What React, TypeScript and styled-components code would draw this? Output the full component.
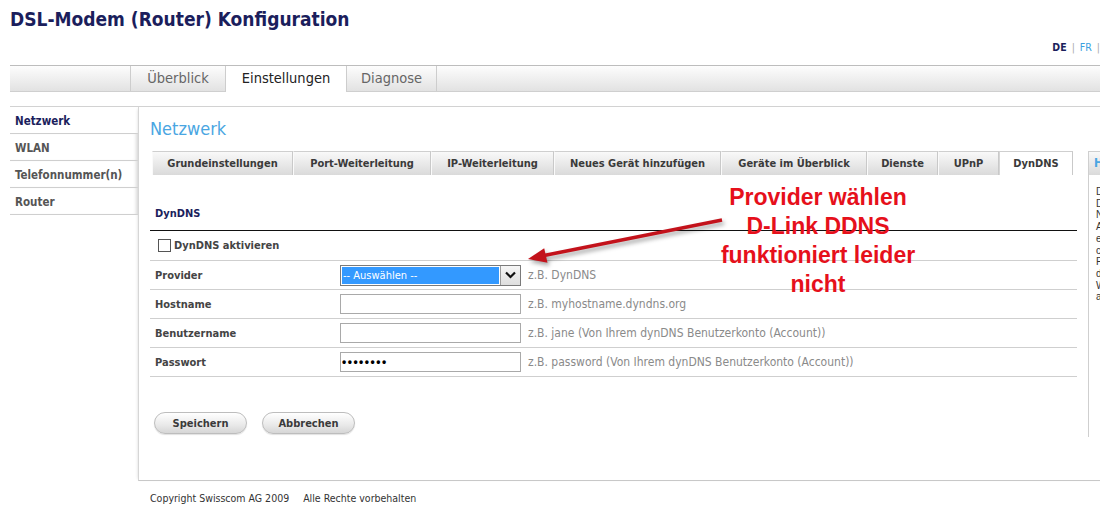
import React from 'react';
import styled, { createGlobalStyle } from 'styled-components';

const GlobalStyle = createGlobalStyle`
  * { box-sizing: border-box; }
  html, body { margin: 0; padding: 0; background: #fff; overflow: hidden; }
  body {
    font-family: "DejaVu Sans Condensed", "DejaVu Sans", Tahoma, sans-serif;
    color: #333;
  }
`;

const Page = styled.div`
  position: relative;
  width: 1100px;
  height: 526px;
  overflow: hidden;
`;

const Title = styled.h1`
  margin: 0;
  height: 40px;
  padding: 7px 0 0 10px;
  font-size: 19px;
  line-height: 24px;
  font-weight: bold;
  color: #1b1e5c;
`;

const LangBar = styled.div`
  height: 25px;
  display: flex;
  justify-content: flex-end;
  gap: 5px;
  font-size: 10.5px;
  line-height: 14px;
`;

const Lang = styled.span<{ $active?: boolean }>`
  color: ${(p) => (p.$active ? '#1b1e5c' : '#3aa0e0')};
  font-weight: ${(p) => (p.$active ? 'bold' : 'normal')};
`;

const Pipe = styled.span`
  color: #aaa;
`;

const MainNav = styled.div`
  margin-left: 10px;
  height: 27px;
  display: flex;
  padding-left: 120px;
  border-top: 1px solid #bdbdbd;
  border-bottom: 1px solid #cfcfcf;
  background: linear-gradient(#fdfdfd, #e2e2e2);
`;

const NavTab = styled.div<{ $active?: boolean; $w: number }>`
  width: ${(p) => p.$w}px;
  height: ${(p) => (p.$active ? 26 : 25)}px;
  border-left: 1px solid #cdcdcd;
  text-align: center;
  font-size: 14.5px;
  line-height: 25px;
  color: ${(p) => (p.$active ? '#222' : '#666')};
  background: ${(p) => (p.$active ? '#fff' : 'transparent')};
  &:last-child { border-right: 1px solid #cdcdcd; }
`;

const Body = styled.div`
  margin: 14px 0 0 10px;
  display: flex;
  border-top: 1px solid #d2d2d2;
`;

const Sidebar = styled.div`
  width: 128px;
  flex: none;
`;

const SideItem = styled.div<{ $active?: boolean }>`
  height: 27px;
  padding: 2px 0 0 5px;
  border-bottom: 1px solid #cfcfcf;
  font-size: 11.5px;
  font-weight: bold;
  line-height: 24px;
  color: ${(p) => (p.$active ? '#1b1e5c' : '#555')};
  box-shadow: ${(p) => (p.$active ? 'none' : 'inset -4px 0 4px -3px #cfcfcf')};
`;

const Content = styled.div`
  flex: 1;
  height: 374px;
  padding-left: 11px;
  border-left: 1px solid #d6d6d6;
  border-bottom: 1px solid #c8c8c8;
  box-shadow: -2px 0 3px -2px #d8d8d8;
`;

const Heading = styled.h2`
  margin: 12px 0 12px;
  font-size: 18px;
  line-height: 20px;
  font-weight: normal;
  color: #4aa6e2;
`;

const WorkArea = styled.div`
  display: flex;
  gap: 11px;
`;

const MainCol = styled.div`
  width: 927px;
  flex: none;
`;

const SubTabs = styled.div`
  display: flex;
  margin-left: 2px;
  height: 24px;
`;

const SubTab = styled.div<{ $active?: boolean; $w: number }>`
  width: ${(p) => p.$w}px;
  flex: none;
  height: 24px;
  text-align: center;
  font-size: 11px;
  font-weight: bold;
  line-height: 24px;
  color: #3a3a3a;
  border-top: 1px solid #cfcfcf;
  border-left: 1px solid ${(p) => (p.$active ? '#d6d6d6' : '#fafafa')};
  border-right: 1px solid #c9c9c9;
  background: ${(p) => (p.$active ? '#fff' : 'linear-gradient(#f9f9f9, #dadada)')};
`;

const FormHead = styled.div`
  height: 56px;
  padding: 32px 0 0 5px;
  border-bottom: 1px solid #111;
  font-size: 11px;
  line-height: 14px;
  font-weight: bold;
  color: #1b1e5c;
`;

const Row = styled.div`
  height: 29px;
  display: grid;
  grid-template-columns: 185px 181px auto;
  align-items: center;
  padding-left: 5px;
  border-bottom: 1px solid #cfcfcf;
`;

const CheckRow = styled.div`
  height: 30px;
  display: flex;
  align-items: center;
  gap: 3px;
  padding-left: 8px;
  border-bottom: 1px solid #cfcfcf;
  font-size: 11px;
  font-weight: bold;
  color: #444;
`;

const CheckBox = styled.span`
  width: 13px;
  height: 13px;
  border: 1px solid #555;
  background: #fff;
`;

const Label = styled.span`
  font-size: 11px;
  font-weight: bold;
  color: #444;
`;

const Hint = styled.span`
  margin-left: 7px;
  font-size: 12px;
  color: #8a8a8a;
  white-space: nowrap;
`;

const Input = styled.input`
  width: 181px;
  height: 20px;
  margin: 0;
  padding: 0 1px;
  border: 1px solid #a9a9a9;
  font-size: 12px;
  font-weight: bold;
  letter-spacing: 1.5px;
  color: #000;
  outline: none;
`;

const Select = styled.div`
  width: 181px;
  height: 21px;
  display: flex;
  border: 1px solid #7a7a7a;
  background: #fff;
`;

const SelectValue = styled.div`
  flex: 1;
  margin: 1px;
  padding-left: 1px;
  background: #3399ff;
  color: #fff;
  font-size: 11px;
  line-height: 17px;
`;

const SelectButton = styled.div`
  width: 20px;
  display: flex;
  align-items: center;
  justify-content: center;
  border-left: 1px solid #9a9a9a;
  background: linear-gradient(#f6f6f6, #dedede);
`;

const Buttons = styled.div`
  display: flex;
  gap: 15px;
  margin: 35px 0 0 4px;
`;

const Button = styled.button`
  width: 93px;
  height: 22px;
  padding: 0;
  border: 1px solid #bdbdbd;
  border-radius: 11px;
  background: linear-gradient(#ffffff, #e9e9e9 60%, #d6d6d6);
  font-family: inherit;
  font-size: 11px;
  font-weight: bold;
  color: #3a3a3a;
  box-shadow: 0 1px 1px rgba(0, 0, 0, 0.12);
`;

const Help = styled.div`
  width: 220px;
  flex: none;
`;

const HelpTab = styled.div`
  height: 24px;
  padding-left: 5px;
  border-top: 1px solid #cfcfcf;
  border-left: 1px solid #cfcfcf;
  background: linear-gradient(#f9f9f9, #dadada);
  font-size: 12px;
  font-weight: bold;
  line-height: 23px;
  color: #4aa6e2;
`;

const HelpBody = styled.div`
  height: 262px;
  padding: 11px 0 0 7px;
  border-left: 1px solid #cfcfcf;
  font-family: "Liberation Sans", Arial, sans-serif;
  font-size: 10px;
  line-height: 11.7px;
  color: #333;
`;

const HelpLine = styled.div`
  white-space: nowrap;
`;

const Footer = styled.div`
  padding: 10px 0 0 150px;
  font-size: 10.5px;
  line-height: 14px;
  color: #333;
  display: flex;
  gap: 14px;
`;

const Note = styled.div`
  position: absolute;
  left: 690px;
  top: 183px;
  width: 256px;
  text-align: center;
  font-family: "Liberation Sans", Arial, sans-serif;
  font-size: 23px;
  font-weight: bold;
  line-height: 29px;
  color: #e6101b;
`;

const ArrowLayer = styled.svg`
  position: absolute;
  left: 0;
  top: 0;
  pointer-events: none;
  filter: drop-shadow(2px 3px 2px rgba(0, 0, 0, 0.35));
`;

const subTabs = [
  { t: 'Grundeinstellungen', w: 141 },
  { t: 'Port-Weiterleitung', w: 138 },
  { t: 'IP-Weiterleitung', w: 123 },
  { t: 'Neues Gerät hinzufügen', w: 167 },
  { t: 'Geräte im Überblick', w: 146 },
  { t: 'Dienste', w: 71 },
  { t: 'UPnP', w: 61 },
  { t: 'DynDNS', w: 74, active: true },
];

const helpLines = [
  'Dynamisches DNS (DynDNS)',
  'Dienste ermöglichen den',
  'Netzwerkzugriff über einen',
  'Adressnamen, auch wenn sich',
  'eine öffentliche IP-Adresse',
  'chronisch ändert. Wählen Sie',
  'Provider und Konto aus,',
  'das Sie beim Anbieter haben.',
  'Weitere Informationen finden',
  'auf der Seite des Anbieters.',
];

const Chevron = () => (
  <svg width="11" height="8" viewBox="0 0 11 8">
    <path d="M1 1.5 L5.5 6 L10 1.5" fill="none" stroke="#111" strokeWidth="2.2" />
  </svg>
);

export default function App() {
  return (
    <Page>
      <GlobalStyle />
      <Title>DSL-Modem (Router) Konfiguration</Title>
      <LangBar>
        <Lang $active>DE</Lang>
        <Pipe>|</Pipe>
        <Lang>FR</Lang>
        <Pipe>|</Pipe>
      </LangBar>
      <MainNav>
        <NavTab $w={95}>Überblick</NavTab>
        <NavTab $w={121} $active>Einstellungen</NavTab>
        <NavTab $w={91}>Diagnose</NavTab>
      </MainNav>
      <Body>
        <Sidebar>
          <SideItem $active>Netzwerk</SideItem>
          <SideItem>WLAN</SideItem>
          <SideItem>Telefonnummer(n)</SideItem>
          <SideItem>Router</SideItem>
        </Sidebar>
        <Content>
          <Heading>Netzwerk</Heading>
          <WorkArea>
            <MainCol>
              <SubTabs>
                {subTabs.map((s) => (
                  <SubTab key={s.t} $w={s.w} $active={s.active}>
                    {s.t}
                  </SubTab>
                ))}
              </SubTabs>
              <FormHead>DynDNS</FormHead>
              <CheckRow>
                <CheckBox />
                DynDNS aktivieren
              </CheckRow>
              <Row>
                <Label>Provider</Label>
                <Select>
                  <SelectValue>-- Auswählen --</SelectValue>
                  <SelectButton>
                    <Chevron />
                  </SelectButton>
                </Select>
                <Hint>z.B. DynDNS</Hint>
              </Row>
              <Row>
                <Label>Hostname</Label>
                <Input readOnly />
                <Hint>z.B. myhostname.dyndns.org</Hint>
              </Row>
              <Row>
                <Label>Benutzername</Label>
                <Input readOnly />
                <Hint>z.B. jane (Von Ihrem dynDNS Benutzerkonto (Account))</Hint>
              </Row>
              <Row>
                <Label>Passwort</Label>
                <Input type="password" readOnly defaultValue="geheim12" />
                <Hint>z.B. password (Von Ihrem dynDNS Benutzerkonto (Account))</Hint>
              </Row>
              <Buttons>
                <Button>Speichern</Button>
                <Button>Abbrechen</Button>
              </Buttons>
            </MainCol>
            <Help>
              <HelpTab>Hilfe</HelpTab>
              <HelpBody>
                {helpLines.map((l) => (
                  <HelpLine key={l}>{l}</HelpLine>
                ))}
              </HelpBody>
            </Help>
          </WorkArea>
        </Content>
      </Body>
      <Footer>
        <span>Copyright Swisscom AG 2009</span>
        <span>Alle Rechte vorbehalten</span>
      </Footer>

      <Note>
        Provider wählen
        <br />
        D-Link DDNS
        <br />
        funktioniert leider
        <br />
        nicht
      </Note>
      <ArrowLayer width="1100" height="526" viewBox="0 0 1100 526">
        <line x1="722" y1="220" x2="544" y2="255.5" stroke="#c3121b" strokeWidth="3.5" />
        <polygon points="528,259 547.5,262.8 544.2,248.2" fill="#c3121b" />
      </ArrowLayer>
    </Page>
  );
}
